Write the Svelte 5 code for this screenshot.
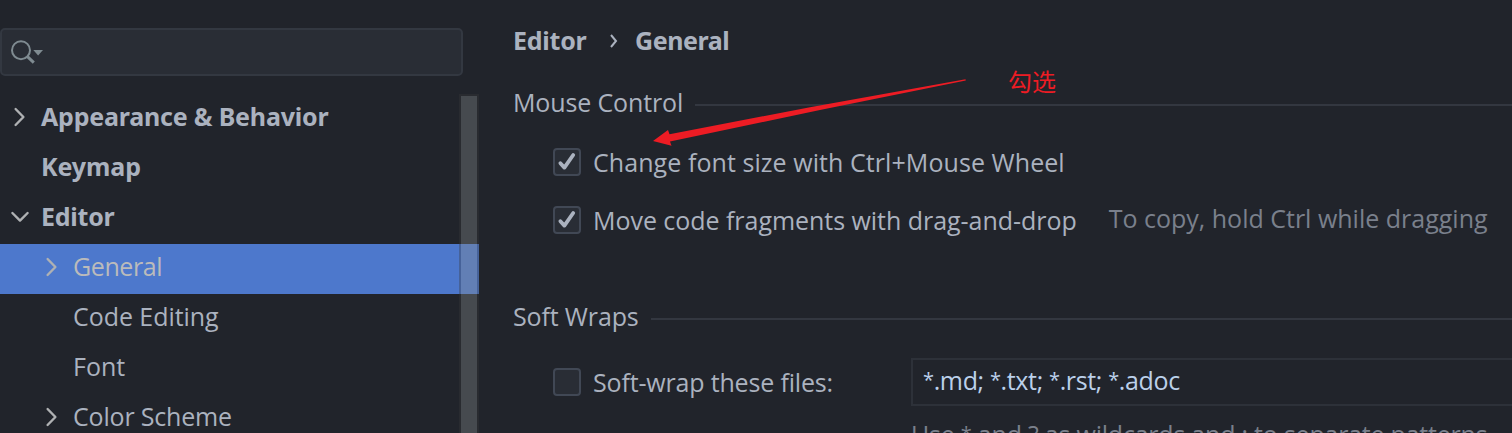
<script>
  const tree = [
    { label: 'Appearance & Behavior', bold: true, arrow: 'right', ls: -0.2 },
    { label: 'Keymap', bold: true, ls: -0.1 },
    { label: 'Editor', bold: true, arrow: 'down', ls: -0.25 },
    { label: 'General', child: true, arrow: 'right', selected: true, ls: -0.4 },
    { label: 'Code Editing', child: true, ls: -0.05 },
    { label: 'Font', child: true, ls: 0 },
    { label: 'Color Scheme', child: true, arrow: 'right', ls: -0.18 },
  ];
</script>

{#snippet checkbox(checked)}
  <span class="box">
    {#if checked}
      <svg width="28" height="28" viewBox="0 0 28 28">
        <path d="M7.4 15.2 L11.4 19.6 L20.2 7" />
      </svg>
    {/if}
  </span>
{/snippet}

<div class="window">
  <aside>
    <div class="search">
      <svg width="36" height="28" viewBox="0 0 36 28">
        <circle cx="12" cy="11.2" r="9" fill="none" stroke="#7f8b91" stroke-width="2" />
        <path d="M18.2 17.4 L24.8 23.6" stroke="#7f8b91" stroke-width="3" />
        <path d="M24.3 11 H34 L29.1 16.6 Z" fill="#7f8b91" />
      </svg>
    </div>
    <div class="tree">
      {#each tree as item}
        <div class="row" class:bold={item.bold} class:child={item.child} class:selected={item.selected}>
          <span class="arrow">
            {#if item.arrow === 'right'}
              <svg width="20" height="20" viewBox="0 0 20 20"><path d="M5.6 2 L13.4 10 L5.6 18" /></svg>
            {:else if item.arrow === 'down'}
              <svg width="20" height="20" viewBox="0 0 20 20"><path d="M2.4 6 L10 13.6 L17.6 6" /></svg>
            {/if}
          </span>
          <span class="label" style="letter-spacing:{item.ls}px">{item.label}</span>
        </div>
      {/each}
    </div>
    <div class="scrollbar"></div>
  </aside>

  <main>
    <header><span class="c1">Editor</span><svg width="8" height="16" viewBox="0 0 8 16"><path d="M1 2 L6 8 L1 14" /></svg><span class="c2">General</span></header>
    <h2 class="mouse"><span>Mouse Control</span><i></i></h2>
    <div class="option first">{@render checkbox(true)}<span class="change">Change font size with Ctrl+Mouse Wheel</span></div>
    <div class="option second">{@render checkbox(true)}<span class="move">Move code fragments with drag-and-drop</span><span class="hint">To copy, hold Ctrl while dragging</span></div>
    <h2 class="wraps"><span>Soft Wraps</span><i></i></h2>
    <div class="option third">
      {@render checkbox(false)}<span class="files">Soft-wrap these files:</span>
      <div class="field"><b>*</b>.md; <b>*</b>.txt; <b>*</b>.rst; <b>*</b>.adoc</div>
    </div>
    <p>Use <b>*</b> and ? as wildcards and ; to separate patterns</p>
  </main>

  <svg class="pointer" width="314" height="66" viewBox="652 76 314 66">
    <path d="M653 141 L668 130 L669.5 134.2 L810 107.2 L965.5 79.2 L965.8 80.4 L820 110 L670 141.4 L671.5 145.8 Z" fill="#ed1c24" />
  </svg>
  <div class="note">勾选</div>
</div>

<style>
  :global(body) { background: #21242b; overflow: hidden; }
  .window {
    position: relative;
    display: flex;
    width: 1512px;
    height: 433px;
    overflow: hidden;
    background: #21242b;
    color: #abb2bf;
    font: 25px/50px "Open Sans", "Noto Sans", sans-serif;
    white-space: nowrap;
  }
  aside { position: relative; width: 479px; flex: none; padding-top: 28px; }
  .search {
    box-sizing: border-box;
    width: 463px;
    height: 48px;
    padding: 9px 0 0 7px;
    border: 2px solid #333841;
    border-radius: 5px;
    background: #292d35;
  }
  svg { display: block; flex: none; }
  .tree { margin-top: 18px; }
  .row { display: flex; height: 50px; padding-left: 10px; }
  .row.child { padding-left: 42px; }
  .label { line-height: 44px; }
  .arrow { width: 31px; flex: none; padding-top: 13px; }
  .arrow path { fill: none; stroke: #afb1b3; stroke-width: 2.4; stroke-linecap: round; stroke-linejoin: round; }
  .selected { background: #4d78cc; color: #bbb; }
  .bold, header { font-family: "Noto Sans", sans-serif; font-weight: 700; }
  .scrollbar {
    position: absolute;
    top: 94px;
    right: 0;
    bottom: -10px;
    width: 16px;
    border: 2px solid rgba(56, 56, 56, .35);
    background: rgba(135, 140, 140, .37);
    background-clip: padding-box;
  }
  main { flex: 1; min-width: 0; padding-left: 34px; }
  header { display: flex; align-items: center; height: 50px; margin-top: 16px; line-height: 48px; }
  header path { fill: none; stroke: #abb2bf; stroke-width: 2; }
  header span, h2 span { padding-bottom: 2px; }
  .c1 { width: 97px; letter-spacing: -.25px; }
  .c2 { margin-left: 17px; letter-spacing: -.45px; }
  h2 { display: flex; align-items: center; height: 50px; margin: 0; font-size: 25px; font-weight: 400; line-height: 48px; letter-spacing: -.14px; }
  h2 i { flex: 1; height: 2px; background: #333740; }
  .mouse { margin-top: 12px; }
  .mouse span { width: 182px; }
  .wraps span { width: 138px; }
  .mouse i, .wraps i { margin-top: 4px; }
  .option { display: flex; align-items: center; height: 50px; padding-left: 40px; }
  .first { margin-top: 9px; }
  .second { margin-top: 8px; }
  .wraps { margin-top: 47px; }
  .third { margin-top: 15px; }
  .box {
    box-sizing: border-box;
    width: 28px;
    height: 28px;
    flex: none;
    margin-right: 12px;
    border: 2px solid #414855;
    border-radius: 4px;
    background: #292d35;
  }
  .box svg { margin: -2px; }
  .box path { fill: none; stroke: #abb2bf; stroke-width: 3.8; stroke-linecap: round; stroke-linejoin: round; }
  .change { letter-spacing: .07px; }
  .move { letter-spacing: -.04px; }
  .hint { align-self: flex-start; margin-left: 32px; color: #7a808c; line-height: 47px; }
  .files { width: 318px; letter-spacing: -.17px; }
  .field {
    box-sizing: border-box;
    flex: 1;
    height: 48px;
    padding-left: 10px;
    border: 2px solid #2d3139;
    border-right: 0;
    line-height: 41px;
    letter-spacing: -.36px;
    color: #bbd0ea;
  }
  b { font-size: 20px; font-weight: 400; line-height: 0; vertical-align: 3px; }
  p { margin: 2px 0 0 398px; color: #7a808c; letter-spacing: -.22px; }
  .pointer { position: absolute; left: 652px; top: 76px; overflow: visible; }
  .note {
    position: absolute;
    left: 1008px;
    top: 63px;
    color: #ed1c24;
    font: 24px/36px "Noto Sans CJK SC", sans-serif;
  }
</style>
